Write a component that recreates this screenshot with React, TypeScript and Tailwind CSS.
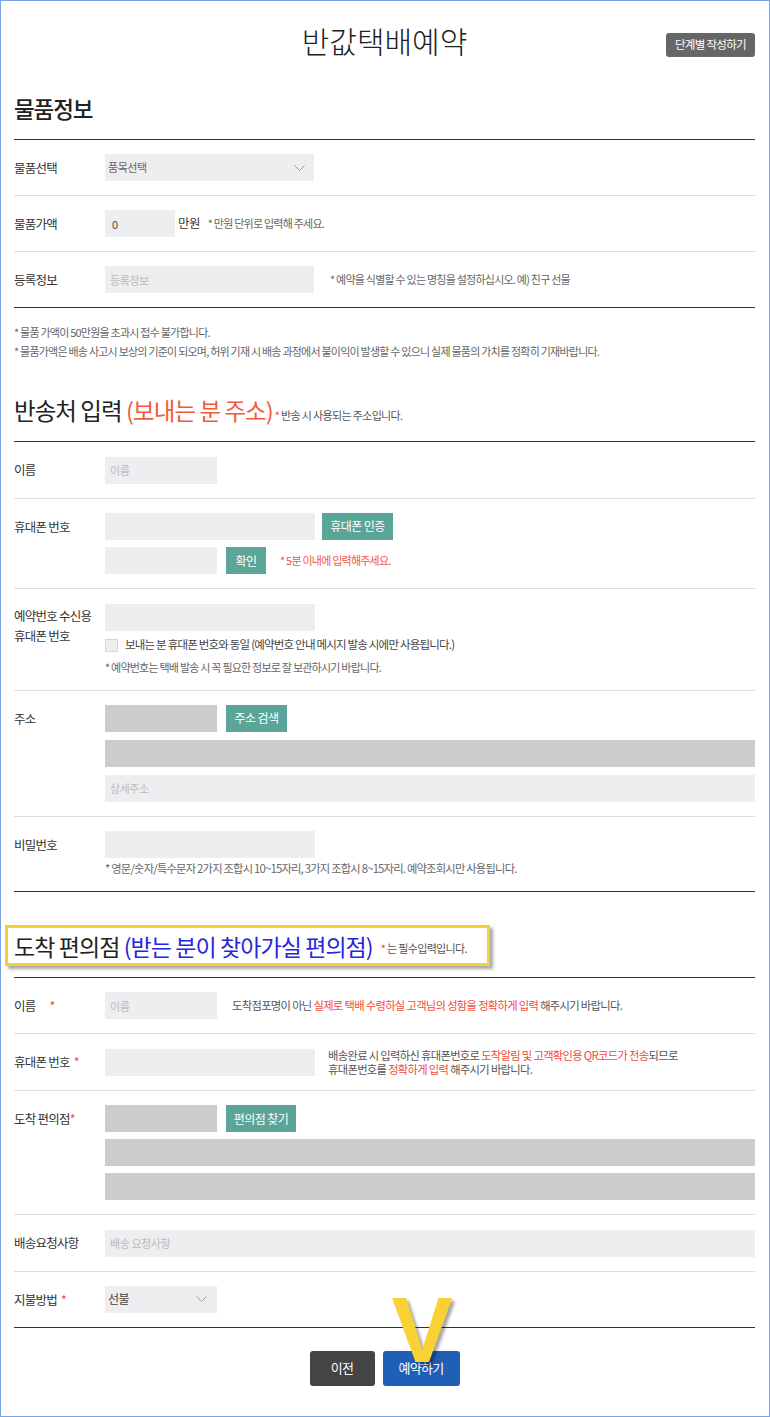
import React from 'react';

function Chevron() {
    return (
        <svg width="11" height="6" viewBox="0 0 11 6" fill="none">
            <path d="M0.5 0.5 L5.5 5.5 L10.5 0.5" stroke="#9a9a9a" strokeWidth="1" />
        </svg>
    );
}

function Row({ label, dark, children }: { label: React.ReactNode; dark?: boolean; children: React.ReactNode }) {
    return (
        <div className={`flex py-[14px] border-b ${dark ? 'border-[#333]' : 'border-[#dcdcdc]'}`}>
            <div className="w-[91px] shrink-0 text-[12.5px] leading-[27px] text-[#333] tracking-[-0.06em]">{label}</div>
            <div className="flex-1 min-w-0">{children}</div>
        </div>
    );
}

function Star({ gap }: { gap: string }) {
    return <span className={`text-[#f04a3a] ${gap}`}>*</span>;
}

function TealButton({ children, w }: { children: React.ReactNode; w: string }) {
    return (
        <button className={`${w} h-[27px] bg-[#5aa598] text-white text-[12px] tracking-[-0.05em] shrink-0`}>{children}</button>
    );
}

export default function App() {
    const light = "h-[27px] bg-[#eeedef] text-[11px] text-[#444] placeholder:text-[#bbb] px-[5px] outline-none tracking-[-0.04em]";
    const note = "text-[11px] tracking-[-0.07em] text-[#666]";
    const note3 = "text-[11.3px] tracking-[-0.06em] text-[#555]";

    return (
        <div className="w-[770px] h-[1417px] box-border border border-[#79a3e6] bg-white overflow-hidden font-['Noto_Sans_CJK_KR','Noto_Sans',sans-serif] text-[#222]">
            <div className="pl-[13px] pr-[14px]">
                {/* header */}
                <div className="grid grid-cols-[1fr_auto_1fr] pt-[19px]">
                    <div />
                    <h1 className="text-[30px] leading-[40px] font-light text-[#222]">반값택배예약</h1>
                    <div className="flex justify-end items-start">
                        <button className="mt-[13px] h-[24px] px-[9px] bg-[#666] rounded-[3px] text-white text-[11.5px] tracking-[-0.06em]">단계별 작성하기</button>
                    </div>
                </div>

                {/* 물품정보 */}
                <div className="mt-[33px] pb-[16px] border-b border-[#333]">
                    <h2 className="text-[22.5px] leading-[30px] font-medium tracking-[-0.05em]">물품정보</h2>
                </div>

                <Row label="물품선택">
                    <div className="w-[209px] h-[27px] bg-[#eeedef] flex items-center justify-between pl-[3px] pr-[9px]">
                        <span className="text-[11px] text-[#666] tracking-[-0.04em]">품목선택</span>
                        <Chevron />
                    </div>
                </Row>
                <Row label="물품가액">
                    <div className="flex items-center">
                        <input className={`${light} w-[70px] pl-[7px]`} defaultValue="0" />
                        <span className="ml-[3px] text-[12.5px] text-[#333] tracking-[-0.05em]">만원</span>
                        <span className={`ml-[8px] ${note}`}>* 만원 단위로 입력해 주세요.</span>
                    </div>
                </Row>
                <Row label="등록정보" dark>
                    <div className="flex items-center">
                        <input className={`${light} w-[209px]`} placeholder="등록정보" />
                        <span className={`ml-[16px] ${note}`}>* 예약을 식별할 수 있는 명칭을 설정하십시오. 예) 친구 선물</span>
                    </div>
                </Row>

                <div className={`pt-[15px] leading-[19px] ${note}`}>
                    <p>* 물품 가액이 50만원을 초과시 접수 불가합니다.</p>
                    <p>* 물품가액은 배송 사고시 보상의 기준이 되오며, 허위 기재 시 배송 과정에서 불이익이 발생할 수 있으니 실제 물품의 가치를 정확히 기재바랍니다.</p>
                </div>

                {/* 반송처 입력 */}
                <div className="mt-[34px] pb-[16px] border-b border-[#333] flex items-baseline">
                    <h2 className="text-[23.5px] leading-[30px] tracking-[-0.04em]">
                        반송처 입력 <span className="text-[#f15b3c]">(보내는 분 주소)</span>
                    </h2>
                    <span className="text-[11px] tracking-[-0.06em] text-[#555] ml-[2px]"><span className="text-[#f04a3a]">*</span> 반송 시 사용되는 주소입니다.</span>
                </div>

                <Row label="이름">
                    <input className={`${light} w-[112px]`} placeholder="이름" />
                </Row>
                <Row label="휴대폰 번호">
                    <div className="flex flex-col gap-[7px]">
                        <div className="flex gap-[7px]">
                            <input className={`${light} w-[210px]`} />
                            <TealButton w="w-[71px]">휴대폰 인증</TealButton>
                        </div>
                        <div className="flex items-center">
                            <input className={`${light} w-[112px]`} />
                            <div className="ml-[9px]"><TealButton w="w-[40px]">확인</TealButton></div>
                            <span className="ml-[14px] text-[11px] tracking-[-0.07em] text-[#f2553f]">* 5분 이내에 입력해주세요.</span>
                        </div>
                    </div>
                </Row>
                <Row label={<div className="leading-[20px] pt-[3px]">예약번호 수신용<br />휴대폰 번호</div>}>
                    <input className={`${light} w-[210px]`} />
                    <div className="mt-[5px] flex items-center h-[19px]">
                        <div className="w-[13px] h-[13px] bg-[#eeedef] border border-[#d6d6d6]" />
                        <span className="ml-[7px] text-[11.5px] tracking-[-0.07em] text-[#444]">보내는 분 휴대폰 번호와 동일 (예약번호 안내 메시지 발송 시에만 사용됩니다.)</span>
                    </div>
                    <p className={`mt-[3px] leading-[18px] ${note}`}>* 예약번호는 택배 발송 시 꼭 필요한 정보로 잘 보관하시기 바랍니다.</p>
                </Row>
                <Row label="주소">
                    <div className="flex flex-col gap-[8px]">
                        <div className="flex gap-[9px]">
                            <div className="w-[112px] h-[27px] bg-[#cdcbcd]" />
                            <TealButton w="w-[61px]">주소 검색</TealButton>
                        </div>
                        <div className="h-[27px] bg-[#cdcbcd]" />
                        <input className={`${light} w-full`} placeholder="상세주소" />
                    </div>
                </Row>
                <Row label="비밀번호" dark>
                    <input className={`${light} w-[210px]`} />
                    <p className={`mt-[1px] leading-[18px] text-[11.3px] tracking-[-0.07em] text-[#666]`}>* 영문/숫자/특수문자 2가지 조합시 10~15자리, 3가지 조합시 8~15자리. 예약조회시만 사용됩니다.</p>
                </Row>

                {/* 도착 편의점 */}
                <div className="pt-[33px] pb-[11px] border-b border-[#333]">
                    <div className="ml-[-9px] w-[485px] h-[41px] border-[3px] border-[#f6cf32] shadow-[3px_3px_3px_rgba(0,0,0,0.35)] flex items-center pl-[6px]">
                        <h2 className="text-[23px] leading-[30px] tracking-[-0.04em] whitespace-nowrap">
                            도착 편의점 <span className="text-[#2626dc]">(받는 분이 찾아가실 편의점)</span>
                        </h2>
                        <span className="ml-[8px] mt-[6px] text-[11px] tracking-[-0.06em] text-[#555] whitespace-nowrap"><span className="text-[#f04a3a]">*</span> 는 필수입력입니다.</span>
                    </div>
                </div>

                <Row label={<>이름<Star gap="ml-[14px]" /></>}>
                    <div className="flex items-center">
                        <input className={`${light} w-[112px]`} placeholder="이름" />
                        <span className={`ml-[15px] ${note3}`}>
                            도착점포명이 아닌 <span className="text-[#f04a3a]">실제로 택배 수령하실 고객님의 성함을 정확하게 입력</span> 해주시기 바랍니다.
                        </span>
                    </div>
                </Row>
                <Row label={<>휴대폰 번호<Star gap="ml-[4px]" /></>}>
                    <div className="flex items-center">
                        <input className={`${light} w-[210px]`} />
                        <span className={`ml-[13px] leading-[14px] ${note3}`}>
                            배송완료 시 입력하신 휴대폰번호로 <span className="text-[#f04a3a]">도착알림 및 고객확인용 QR코드가 전송</span>되므로<br />
                            휴대폰번호를 <span className="text-[#f04a3a]">정확하게 입력</span> 해주시기 바랍니다.
                        </span>
                    </div>
                </Row>
                <Row label={<>도착 편의점<span className="text-[#f04a3a]">*</span></>}>
                    <div className="flex flex-col gap-[7px]">
                        <div className="flex gap-[9px]">
                            <div className="w-[112px] h-[27px] bg-[#cdcbcd]" />
                            <TealButton w="w-[70px]">편의점 찾기</TealButton>
                        </div>
                        <div className="h-[27px] bg-[#cdcbcd]" />
                        <div className="h-[27px] bg-[#cdcbcd]" />
                    </div>
                </Row>
                <Row label="배송요청사항">
                    <input className={`${light} w-full`} placeholder="배송 요청사항" />
                </Row>
                <Row label={<>지불방법<Star gap="ml-[4px]" /></>} dark>
                    <div className="w-[112px] h-[27px] bg-[#eeedef] flex items-center justify-between pl-[3px] pr-[10px]">
                        <span className="text-[12px] text-[#444] tracking-[-0.04em]">선불</span>
                        <Chevron />
                    </div>
                </Row>

                {/* buttons */}
                <div className="mt-[23px] flex justify-center gap-[8px]">
                    <button className="w-[65px] h-[35px] bg-[#444] rounded-[3px] text-white text-[13px] tracking-[-0.05em]">이전</button>
                    <div className="relative">
                        <button className="w-[77px] h-[35px] bg-[#1f5fb6] rounded-[3px] text-white text-[13px] tracking-[-0.05em]">예약하기</button>
                        <span className="absolute left-[9px] top-[-67px] z-10 font-['Liberation_Sans',sans-serif] font-bold text-[92px] leading-none text-[#f9d133] [text-shadow:3px_3px_3px_rgba(0,0,0,0.35)] pointer-events-none">V</span>
                    </div>
                </div>
            </div>
        </div>
    );
}
